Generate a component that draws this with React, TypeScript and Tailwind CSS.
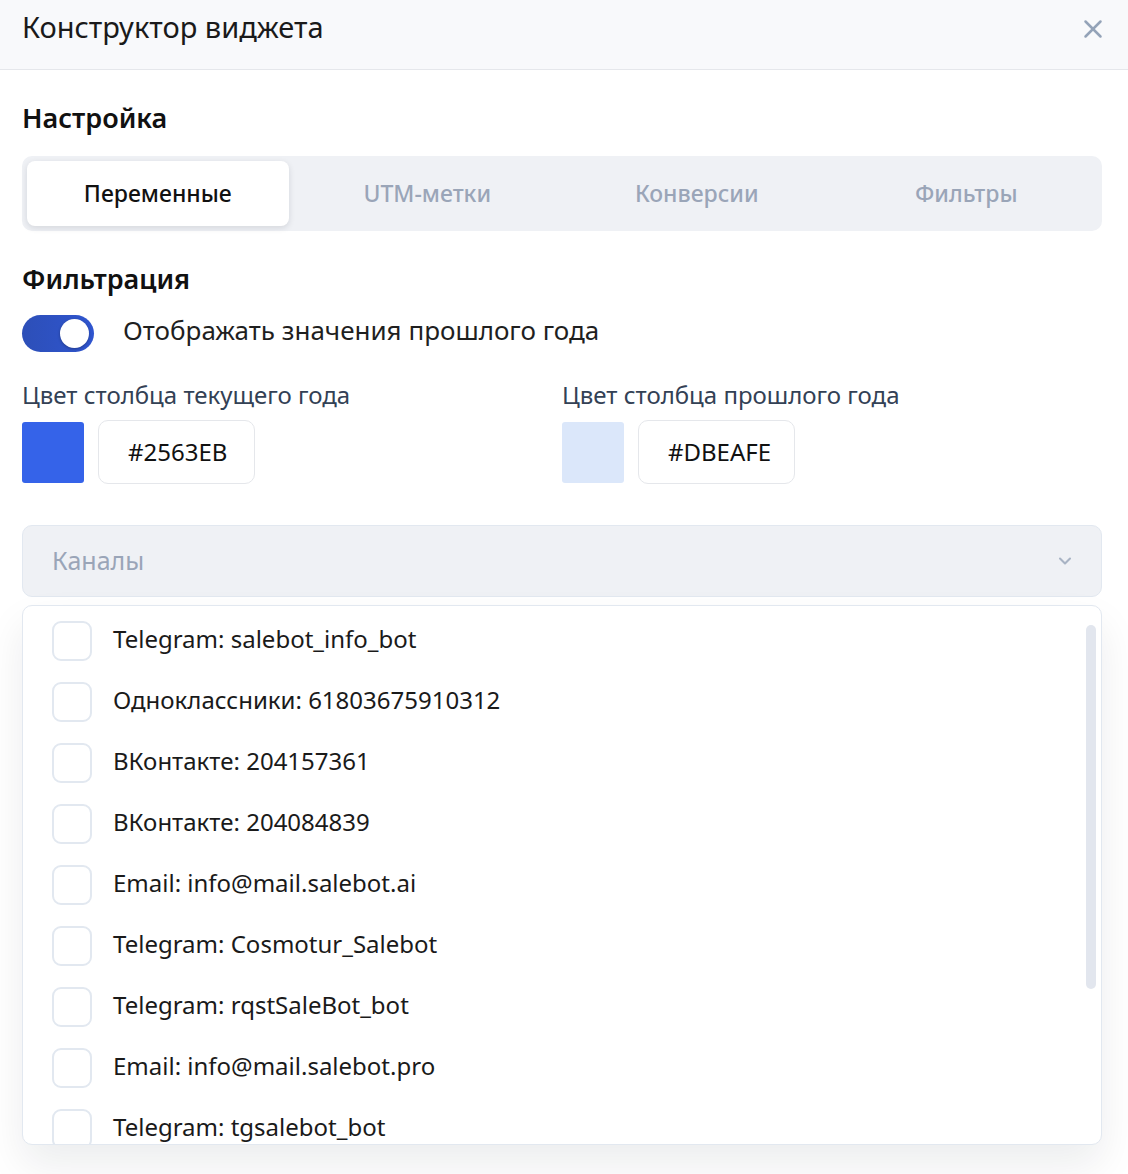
import { ChevronDown, X } from 'lucide-react';

const channels = [
  'Telegram: salebot_info_bot',
  'Одноклассники: 61803675910312',
  'ВКонтакте: 204157361',
  'ВКонтакте: 204084839',
  'Email: info@mail.salebot.ai',
  'Telegram: Cosmotur_Salebot',
  'Telegram: rqstSaleBot_bot',
  'Email: info@mail.salebot.pro',
  'Telegram: tgsalebot_bot',
];

const tabs = ['Переменные', 'UTM-метки', 'Конверсии', 'Фильтры'];

function ColorField({ label, swatch, value }: { label: string; swatch: string; value: string }) {
  return (
    <div className="flex flex-col">
      <div className="text-[24px] leading-[30px] text-[#334155]">{label}</div>
      <div className="mt-[10px] flex items-center gap-[14px]">
        <div className={`h-[61px] w-[62px] rounded-[3px] ${swatch}`} />
        <div className="flex h-[64px] w-[157px] items-center overflow-hidden rounded-[10px] border border-[#e5e7eb] bg-white pl-[29px] pr-[20px] text-[24px] text-[#111]">
          <span className="whitespace-nowrap">{value}</span>
        </div>
      </div>
    </div>
  );
}

export default function App() {
  return (
    <div
      className="h-[1174px] w-full overflow-hidden bg-white text-[#111]"
      style={{ fontFamily: '"Noto Sans", "Open Sans", sans-serif' }}
    >
      {/* Header */}
      <div className="flex h-[70px] items-center justify-between border-b border-[#e5e7eb] bg-[#f8f9fb] pl-[22px] pr-[20px]">
        <h1 className="-mt-[16px] text-[29px] leading-none text-[#1a1a1a]">Конструктор виджета</h1>
        <X className="-mt-[12px] h-[30px] w-[30px] text-[#94a3b8]" strokeWidth={2} />
      </div>

      <div className="pl-[22px] pr-[26px]">
        <h2 className="mt-[32px] text-[27px] font-semibold leading-[32px]">Настройка</h2>

        {/* Tabs */}
        <div className="mt-[22px] grid h-[75px] grid-cols-4 gap-[8px] rounded-[10px] bg-[#eff1f5] p-[5px]">
          {tabs.map((t, i) => (
            <div
              key={t}
              className={
                i === 0
                  ? 'flex items-center justify-center rounded-[8px] bg-white text-[23px] font-medium text-[#111] shadow-[0_2px_6px_rgba(15,23,42,0.12)]'
                  : 'flex items-center justify-center text-[23px] font-medium text-[#9aa5b8]'
              }
            >
              {t}
            </div>
          ))}
        </div>

        <h2 className="mt-[32px] text-[27px] font-semibold leading-[32px]">Фильтрация</h2>

        {/* Toggle */}
        <div className="mt-[20px] flex items-center gap-[29px]">
          <div className="relative h-[37px] w-[72px] shrink-0 rounded-full bg-gradient-to-r from-[#2d4fb8] to-[#2f55cf]">
            <div className="absolute right-[5px] top-[4px] h-[29px] w-[29px] rounded-full bg-white shadow-[0_1px_3px_rgba(0,0,0,0.3)]" />
          </div>
          <span className="-mt-[6px] text-[26px] text-[#1f1f1f]">Отображать значения прошлого года</span>
        </div>

        {/* Colors */}
        <div className="mt-[28px] grid grid-cols-2">
          <ColorField label="Цвет столбца текущего года" swatch="bg-[#3563e9]" value="#2563EB" />
          <ColorField label="Цвет столбца прошлого года" swatch="bg-[#dbe7fa]" value="#DBEAFE" />
        </div>

        {/* Select */}
        <div className="mt-[41px] flex h-[72px] items-center justify-between rounded-[10px] border border-[#e2e8f0] bg-[#eff1f5] pl-[29px] pr-[26px]">
          <span className="text-[25px] text-[#9aa5b8]">Каналы</span>
          <ChevronDown className="h-[20px] w-[20px] text-[#a8b3c4]" strokeWidth={2.5} />
        </div>

        {/* Options */}
        <div className="relative mt-[8px] h-[540px] overflow-hidden rounded-[10px] border border-[#e2e8f0] bg-white shadow-[0_20px_40px_rgba(15,23,42,0.08)]">
          <div className="flex flex-col pl-[29px] pt-[15px]">
            {channels.map((c) => (
              <div key={c} className="flex h-[61px] shrink-0 items-start gap-[21px]">
                <div className="h-[40px] w-[40px] shrink-0 rounded-[9px] border-2 border-[#e2e8f0] bg-white" />
                <span className="mt-[2px] text-[24px] leading-[32px] text-[#1a1a1a]">{c}</span>
              </div>
            ))}
          </div>
          <div className="absolute right-[5px] top-[19px] h-[364px] w-[10px] rounded-full bg-[#e2e6ee]" />
        </div>
      </div>
    </div>
  );
}
